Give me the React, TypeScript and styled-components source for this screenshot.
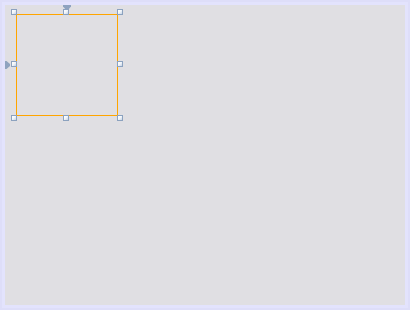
import React from "react";
import styled, { createGlobalStyle } from "styled-components";

const Global = createGlobalStyle`
  html, body { margin: 0; padding: 0; background: #dedef9; }
  body { font-family: "Liberation Sans", Arial, sans-serif; }
`;

const Page = styled.div`
  width: 410px;
  height: 310px;
  box-sizing: border-box;
  padding: 2px;
  background: #dedef9;
`;

const Frame = styled.div`
  width: 406px;
  height: 306px;
  box-sizing: border-box;
  border: 3px solid #e3e3fd;
`;

const Canvas = styled.div`
  position: relative;
  width: 400px;
  height: 300px;
  background: #e0dfe3;
  overflow: hidden;
`;

const Shape = styled.div`
  position: absolute;
  left: 11px;
  top: 9px;
  width: 102px;
  height: 102px;
  box-sizing: border-box;
  border: 1px solid #ffa500;
`;

const Handle = styled.div<{ $x: number; $y: number }>`
  position: absolute;
  left: ${(p) => p.$x}px;
  top: ${(p) => p.$y}px;
  width: 6px;
  height: 6px;
  box-sizing: border-box;
  border: 1px solid #8ca2bf;
  background: linear-gradient(135deg, #ffffff 0%, #f4f7fb 45%, #c6d4e6 100%);
`;

const Marker = styled.svg<{ $x: number; $y: number }>`
  position: absolute;
  left: ${(p) => p.$x}px;
  top: ${(p) => p.$y}px;
  display: block;
`;

const xs = [6, 58, 112];
const ys = [4, 56, 110];

export default function App() {
  const handles: Array<[number, number]> = [];
  ys.forEach((y, j) =>
    xs.forEach((x, i) => {
      if (!(i === 1 && j === 1)) handles.push([x, y]);
    })
  );
  return (
    <>
      <Global />
      <Page>
        <Frame>
          <Canvas>
            <Shape />
            {handles.map(([x, y]) => (
              <Handle key={`${x}-${y}`} $x={x} $y={y} />
            ))}
            <Marker $x={58} $y={0} width={8} height={5} viewBox="0 0 8 5">
              <polygon points="0,0 8,0 8,1.5 5,5 3,5 0,1.5" fill="#8fa3bf" />
            </Marker>
            <Marker $x={0} $y={56} width={5} height={8} viewBox="0 0 5 8">
              <polygon points="0,0 1.5,0 5,3 5,5 1.5,8 0,8" fill="#8fa3bf" />
            </Marker>
          </Canvas>
        </Frame>
      </Page>
    </>
  );
}
